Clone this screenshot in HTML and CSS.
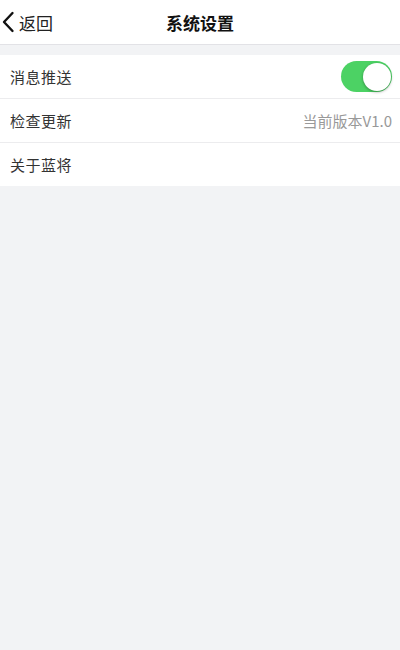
FILE: index.html
```html
<!DOCTYPE html>
<html lang="zh">
<head>
<meta charset="utf-8">
<link rel="stylesheet" href="styles.css">
</head>
<body>
<div class="page">
  <header class="nav">
    <div class="back">
      <svg class="chev" width="14" height="22" viewBox="0 0 14 22"><path d="M11.5 2 L3 11 L11.5 20" fill="none" stroke="#111" stroke-width="2.4" stroke-linecap="round" stroke-linejoin="round"/></svg>
      <span class="back-text">返回</span>
    </div>
    <div class="title">系统设置</div>
  </header>
  <div class="gap"></div>
  <ul class="list">
    <li class="row">
      <span class="label">消息推送</span>
      <span class="switch"><span class="knob"></span></span>
    </li>
    <li class="row">
      <span class="label">检查更新</span>
      <span class="value">当前版本V1.0</span>
    </li>
    <li class="row">
      <span class="label">关于蓝将</span>
    </li>
  </ul>
</div>
</body>
</html>
```
FILE: styles.css
```css
html, body {
  margin: 0;
  padding: 0;
  background: #f2f3f5;
  font-family: "Noto Sans CJK SC", "Noto Sans", sans-serif;
}
.page {
  width: 400px;
  min-height: 650px;
  background: #f2f3f5;
}
.nav {
  height: 44px;
  background: #fff;
  border-bottom: 1px solid #e2e2e6;
  position: relative;
  display: flex;
  align-items: center;
  justify-content: center;
}
.back {
  position: absolute;
  left: 1px;
  top: 0;
  height: 44px;
  display: flex;
  align-items: center;
  gap: 4px;
}
.chev { display: block; }
.back-text {
  font-size: 17px;
  color: #222;
}
.title {
  font-size: 17px;
  font-weight: bold;
  color: #111;
}
.gap {
  height: 10px;
}
.list {
  list-style: none;
  margin: 0;
  padding: 0;
  background: #fff;
}
.row {
  height: 43px;
  display: flex;
  align-items: center;
  justify-content: space-between;
  padding: 0 8px 0 10px;
  border-bottom: 1px solid #ececee;
}
.row:last-child { border-bottom: none; }
.label {
  font-size: 15px;
  color: #333;
  letter-spacing: 0.5px;
}
.value {
  font-size: 15px;
  color: #999;
}
.switch {
  width: 51px;
  height: 31px;
  border-radius: 16px;
  background: #4cd264;
  position: relative;
  display: block;
}
.knob {
  position: absolute;
  right: 1.5px;
  top: 1.5px;
  width: 28px;
  height: 28px;
  border-radius: 50%;
  background: #fff;
  box-shadow: 0 1px 3px rgba(0,0,0,0.35);
}
```
